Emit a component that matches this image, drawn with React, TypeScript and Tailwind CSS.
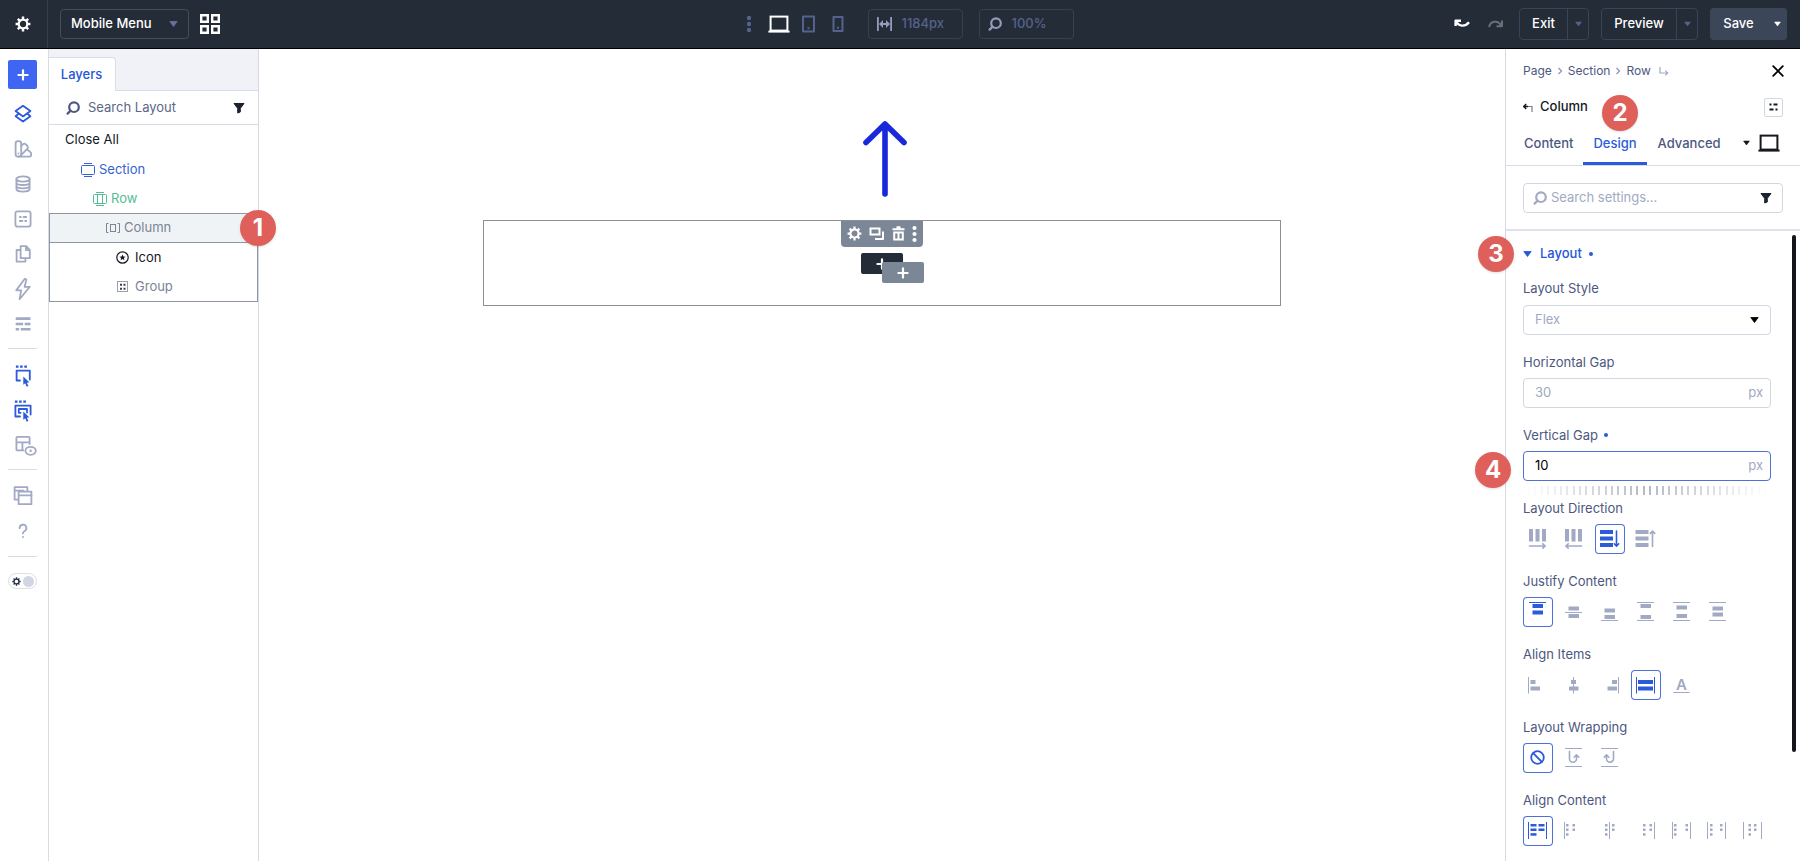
import React from 'react';

type IconProps = { children: React.ReactNode; size?: number; className?: string };

const Icon: React.FC<IconProps> = ({ children, size = 20, className = '' }) => (
  <svg
    width={size}
    height={size}
    viewBox={`0 0 ${size} ${size}`}
    fill="none"
    stroke="currentColor"
    strokeWidth="1.8"
    strokeLinejoin="round"
    strokeLinecap="round"
    className={`shrink-0 ${className}`}
    aria-hidden="true"
  >
    {children}
  </svg>
);

const Caret: React.FC<{ className?: string }> = ({ className = '' }) => (
  <svg width="9" height="6" viewBox="0 0 9 6" className={`shrink-0 ${className}`} aria-hidden="true">
    <path d="M.8.5h7.4L4.5 5.5z" fill="currentColor" stroke="currentColor" strokeWidth=".8" strokeLinejoin="round" />
  </svg>
);

const SearchIcon: React.FC<{ className?: string }> = ({ className = '' }) => (
  <svg width="14" height="14" viewBox="0 0 14 14" fill="none" stroke="currentColor" strokeWidth="2.2" strokeLinecap="round" className={`shrink-0 ${className}`} aria-hidden="true">
    <circle cx="8" cy="6.2" r="4.8" />
    <path d="M4.6 9.6 1.6 12.6" />
  </svg>
);

const FilterIcon: React.FC = () => (
  <svg width="12" height="12" viewBox="0 0 12 12" className="shrink-0 text-[#1c2330]" aria-hidden="true">
    <path d="M1 1.5h10L7.3 6.4V10L4.7 11V6.4z" fill="currentColor" stroke="currentColor" strokeWidth="1" strokeLinejoin="round" />
  </svg>
);

const LaptopIcon: React.FC = () => (
  <svg width="22" height="18" viewBox="0 0 22 18" fill="none" stroke="currentColor" strokeWidth="2" aria-hidden="true">
    <rect x="2.6" y="1.6" width="16.8" height="14" />
    <path d="M.4 16.6h21.2" strokeWidth="2" />
  </svg>
);

const GearIcon: React.FC<{ size: number }> = ({ size }) => (
  <svg width={size} height={size} viewBox="0 0 16 16" fill="none" stroke="currentColor" aria-hidden="true">
    <circle cx="8" cy="8" r="4.3" strokeWidth="2.2" />
    <path
      d="M8 .6v3M8 12.4v3M.6 8h3M12.4 8h3M2.8 2.8l2.1 2.1M11.1 11.1l2.1 2.1M2.8 13.2l2.1-2.1M11.1 4.9l2.1-2.1"
      strokeWidth="2.4"
    />
  </svg>
);

const PlusIcon: React.FC = () => (
  <svg width="12" height="12" viewBox="0 0 12 12" stroke="currentColor" strokeWidth="2.2" strokeLinecap="round" aria-hidden="true">
    <path d="M6 1.4v9.2M1.4 6h9.2" />
  </svg>
);

const Badge: React.FC<{ n: number; className: string }> = ({ n, className }) => (
  <span
    className={`absolute z-20 flex size-9 items-center justify-center rounded-full bg-[#df605b] text-2xl font-bold text-white shadow-sm ${className}`}
  >
    {n}
  </span>
);

const cursor = <path d="M10.3 9.6v8.2l1.9-1.5 1.5 3.5 1.7-.8-1.5-3.3 2.4-.4z" fill="currentColor" stroke="none" />;

const railTop = [
  {
    label: 'Layers',
    active: true,
    icon: (
      <Icon>
        <path d="M10 1.8 17.4 7 10 12.4 2.6 7zM5.6 9.6 2.6 12.2 10 17.6l7.4-5.4-3-2.6" />
      </Icon>
    ),
  },
  {
    label: 'Styles',
    icon: (
      <Icon>
        <rect x="2.6" y="2.2" width="5.6" height="15.4" rx="2.4" />
        <path d="M8.2 7 10 5.2a2 2 0 0 1 2.6 0l1.8 1.8a2 2 0 0 1 0 2.6L7.4 16.8M13.2 10.8h1.4l3 2.6a1.6 1.6 0 0 1 .5 1.2V16a1.6 1.6 0 0 1-1.6 1.6H5.4M5.4 14.4v.2" />
      </Icon>
    ),
  },
  {
    label: 'Data',
    icon: (
      <Icon>
        <ellipse cx="10" cy="5" rx="6.6" ry="2.6" />
        <path d="M3.4 5v10c0 1.5 3 2.7 6.6 2.7s6.6-1.2 6.6-2.7V5M3.4 8.4c0 1.5 3 2.6 6.6 2.6s6.6-1.1 6.6-2.6M3.4 11.8c0 1.5 3 2.6 6.6 2.6s6.6-1.1 6.6-2.6" />
      </Icon>
    ),
  },
  {
    label: 'Presets',
    icon: (
      <Icon>
        <rect x="2.4" y="2.4" width="15.2" height="15.2" rx="2" />
        <path d="M6.8 8h1M10.6 8h2.6M6.8 12h2.6M12.2 12h1" />
      </Icon>
    ),
  },
  {
    label: 'Library',
    icon: (
      <Icon>
        <path d="M7.6 2.2h5.6l3.6 3.6v8.4H7.6zM13 2.4v3.8h3.6M7.4 6H3.6v11.6h8.8v-3.2" />
      </Icon>
    ),
  },
  {
    label: 'Actions',
    icon: (
      <svg width="20" height="24" viewBox="0 0 20 24" fill="none" stroke="currentColor" strokeWidth="1.8" strokeLinejoin="round" aria-hidden="true">
        <path d="M11.8 1.8 3.2 13.4h5l-1.6 8.8L16.8 9.8h-5.2l1.8-7.2z" />
      </svg>
    ),
  },
  {
    label: 'Wireframe',
    icon: (
      <Icon>
        <path d="M4 4.6h12.2M4 10h4.8M13 10h3.2M4 15.2h.8M9 15.2h7.2" strokeWidth="2.6" strokeLinecap="square" />
      </Icon>
    ),
  },
];

const Rail: React.FC = () => (
  <nav aria-label="Builder tools" className="flex w-[49px] shrink-0 flex-col items-center border-r border-[#d9dce3] pt-[11px] pr-[3px] text-[#a1a9c3]">
    <button aria-label="Add" className="flex size-[29px] items-center justify-center rounded-xs bg-[#3f66f2] text-white">
      <PlusIcon />
    </button>
    <div className="mt-[7px] flex flex-col">
      {railTop.map(item => (
        <button
          key={item.label}
          aria-label={item.label}
          className={`flex h-[35px] w-[29px] items-center justify-center ${item.active ? 'text-[#2b5adb]' : ''}`}
        >
          {item.icon}
        </button>
      ))}
    </div>
    <hr className="mt-[7px] w-[29px] border-[#d9dce3]" />
    <div className="mt-[9px] flex flex-col text-[#2b5adb]">
      <button aria-label="Click mode" className="flex h-[35px] w-[29px] items-center justify-center">
        <Icon size={22}>
          <path d="M5 1.6h.4M9.2 1.6h.4M13.4 1.6h.4" strokeWidth="2.2" strokeLinecap="square" />
          <path d="M8 15.5H4.6V5.6h13.2v9" strokeWidth="1.8" />
          <g transform="translate(1 2)">{cursor}</g>
        </Icon>
      </button>
      <button aria-label="Grid mode" className="flex h-[35px] w-[29px] items-center justify-center">
        <Icon size={22}>
          <path d="M4 1.6h.4M8.2 1.6h.4M12.4 1.6h.4" strokeWidth="2.2" strokeLinecap="square" />
          <path d="M8 16.5H3.4V5.6h15.2v9" strokeWidth="1.8" />
          <path d="M8.6 12.8H6.8V9h8.2v3.6" strokeWidth="1.8" />
          <g transform="translate(1 2)">{cursor}</g>
        </Icon>
      </button>
      <button aria-label="Hover mode" className="flex h-[35px] w-[29px] items-center justify-center text-[#a1a9c3]">
        <svg width="26" height="22" viewBox="0 0 26 22" fill="none" stroke="currentColor" strokeWidth="1.8" strokeLinejoin="round" className="ml-1 shrink-0" aria-hidden="true">
          <path d="M12 15.4H5.4a1 1 0 0 1-1-1V2.8a1 1 0 0 1 1-1h11.2a1 1 0 0 1 1 1v7M4.400 7.400h13.200M10.400 7.400v8" />
          <ellipse cx="18.6" cy="15.800" rx="5.200" ry="4" />
          <circle cx="18.600" cy="15.800" r="1.200" fill="currentColor" stroke="none" />
        </svg>
      </button>
    </div>
    <hr className="mt-[6px] w-[29px] border-[#d9dce3]" />
    <div className="mt-2 flex flex-col">
      <button aria-label="Windows" className="flex h-[35px] w-[29px] items-center justify-center">
        <Icon size={22}>
          <path d="M6 14.6H2.6V2.2h12.8v3.6M2.6 5.600h9" />
          <rect x="6.6" y="6.6" width="12.8" height="12.6" />
          <path d="M6.6 10.400h12.8" />
        </Icon>
      </button>
      <button aria-label="Help" className="flex h-[35px] w-[29px] items-center justify-center">
        <Icon>
          <path d="M6.600 7.200a3.400 3.400 0 1 1 4.800 3c-1 .5-1.400 1-1.400 2.200M10 15.800v.2" />
        </Icon>
      </button>
    </div>
    <hr className="mt-2 w-[29px] border-[#d9dce3]" />
    <button aria-label="Toggle theme" className="mt-4 flex h-4 w-[29px] items-center justify-between rounded-full border border-[#dcdfe8] pr-[2px] pl-[3px] text-[#1f2a44]">
      <GearIcon size={9} />
      <span className="size-[11px] rounded-full bg-[#d3d6e2]" />
    </button>
  </nav>
);

const TopBar: React.FC = () => (
  <header className="grid h-[49px] shrink-0 grid-cols-[1fr_auto_1fr] items-center border-b border-black bg-[#242c38] pr-[13px] text-[13px] font-medium text-white">
    <div className="flex h-full items-center">
      <button aria-label="Settings" className="flex h-full w-12 items-center justify-center border-r border-[#343d4c] pr-px">
        <GearIcon size={16} />
      </button>
      <div className="relative ml-3 flex items-center">
        <select aria-label="Template" className="h-[30px] w-[129px] appearance-none rounded-sm border border-[#434d60] bg-transparent pl-[10px]">
          <option>Mobile Menu</option>
        </select>
        <Caret className="pointer-events-none absolute right-[11px] text-[#65719c]" />
      </div>
      <button aria-label="Grid view" className="ml-[11px]">
        <Icon size={20}>
          <path d="M1.200 1.200h6.600v6.600H1.200zM12.200 1.200h6.600v6.600h-6.600zM1.200 12.200h6.600v6.600H1.200zM12.200 12.200h6.600v6.600h-6.600z" strokeWidth="2.400" strokeLinejoin="miter" />
        </Icon>
      </button>
    </div>

    <div className="flex items-center pl-8 text-[#55628c]">
      <button aria-label="More">
        <svg width="6" height="18" viewBox="0 0 6 18" fill="currentColor" aria-hidden="true">
          <circle cx="3" cy="3" r="2.2" />
          <circle cx="3" cy="9" r="2.2" />
          <circle cx="3" cy="15" r="2.2" />
        </svg>
      </button>
      <button aria-label="Desktop" className="ml-4 text-white">
        <LaptopIcon />
      </button>
      <button aria-label="Tablet" className="ml-3">
        <svg width="13" height="18" viewBox="0 0 13 18" fill="none" stroke="currentColor" strokeWidth="2" strokeLinejoin="round" aria-hidden="true">
          <rect x="1" y="1.5" width="11" height="15" />
          <path d="M5.5 13.2h2" />
        </svg>
      </button>
      <button aria-label="Phone" className="ml-[17px]">
        <svg width="12" height="18" viewBox="0 0 12 18" fill="none" stroke="currentColor" strokeWidth="2" strokeLinejoin="round" aria-hidden="true">
          <rect x="1.5" y="2" width="9" height="14" />
          <path d="M5 12.8h2" />
        </svg>
      </button>
      <label className="ml-6 flex h-[30px] w-[95px] items-center gap-[10px] rounded-sm border border-[#364051] pl-2">
        <svg width="15" height="14" viewBox="0 0 15 14" fill="none" stroke="#929cbc" strokeWidth="1.6" aria-hidden="true">
          <path d="M.8 0v14M14.2 0v14M3.5 7h8" strokeWidth="2" />
          <path d="M2 7l4-4v8zM13 7 9 3v8z" fill="#929cbc" stroke="none" />
        </svg>
        <input aria-label="Canvas width" defaultValue="1184px" className="w-12 bg-transparent outline-none" />
      </label>
      <label className="ml-4 flex h-[30px] w-[95px] items-center gap-[10px] rounded-sm border border-[#364051] pl-2">
        <SearchIcon className="text-[#929cbc]" />
        <input aria-label="Zoom" defaultValue="100%" className="w-12 bg-transparent outline-none" />
      </label>
    </div>

    <div className="flex items-center justify-end">
      <button aria-label="Undo">
        <svg width="16" height="10" viewBox="0 0 16 10" fill="none" stroke="currentColor" strokeWidth="2.4" aria-hidden="true">
          <path d="M1.6 1v6M1 1.8h6M2 2.2c3 5.6 9 5.8 13 1" />
        </svg>
      </button>
      <button aria-label="Redo" className="ml-[18px] text-[#68707e]">
        <svg width="16" height="10" viewBox="0 0 16 10" fill="none" stroke="currentColor" strokeWidth="2" aria-hidden="true">
          <path d="M1 8C2.6 1.8 9.5.6 13.5 6.6M14 1.5v6.3M8.5 7.3H14" />
        </svg>
      </button>
      <div className="ml-[15px] flex h-8 items-stretch rounded-sm border border-[#39435a]">
        <button className="w-12 border-r border-[#39435a]">Exit</button>
        <button aria-label="Exit options" className="flex w-5 items-center justify-center text-[#55628c]">
          <Caret className="w-[7px]" />
        </button>
      </div>
      <div className="ml-3 flex h-8 items-stretch rounded-sm border border-[#39435a]">
        <button className="w-[75px] border-r border-[#39435a]">Preview</button>
        <button aria-label="Preview options" className="flex w-5 items-center justify-center text-[#55628c]">
          <Caret className="w-[7px]" />
        </button>
      </div>
      <div className="ml-3 flex h-8 items-stretch rounded-sm bg-[#3b4659]">
        <button className="w-[57px]">Save</button>
        <button aria-label="Save options" className="flex w-5 items-center justify-center">
          <Caret className="w-[7px]" />
        </button>
      </div>
    </div>
  </header>
);

const LayersPanel: React.FC = () => (
  <aside className="flex w-[210px] shrink-0 flex-col border-r border-[#d5d9e0] text-[13px]">
    <div className="flex h-[42px] items-end border-b border-[#d9dce6] bg-[#f1f2f7]">
      <button className="-mb-px h-[34px] w-[67px] rounded-tr-sm border-t border-r border-[#d9dce6] bg-white pt-px pr-px font-medium text-[#2557d6]">
        Layers
      </button>
    </div>
    <div className="flex h-[34px] items-center border-b border-[#d9dce6] pr-[13px] pl-[17px] text-[#4c5880]">
      <SearchIcon />
      <input aria-label="Search Layout" placeholder="Search Layout" className="ml-2 min-w-0 flex-1 outline-none placeholder:text-[#5b6688]" />
      <button aria-label="Filter layers">
        <FilterIcon />
      </button>
    </div>
    <button className="flex h-[30px] items-center pl-4 text-[#14181f]">Close All</button>
    <button className="flex h-[29px] items-center gap-1 pl-8 text-[#3563d3]">
      <svg width="14" height="14" viewBox="0 0 14 14" fill="none" stroke="currentColor" aria-hidden="true">
        <rect x=".5" y="2.5" width="13" height="9" rx="1" />
        <path d="M3 .5h8M3 13.500h8" />
      </svg>
      Section
    </button>
    <button className="flex h-[29px] items-center gap-1 pl-11 text-[#55bd93]">
      <svg width="14" height="14" viewBox="0 0 14 14" fill="none" stroke="currentColor" aria-hidden="true">
        <rect x=".5" y="2.5" width="13" height="9" rx="1" />
        <path d="M3 .5h8M3 13.500h8M4.500 2.500v9M9.500 2.500v9" />
      </svg>
      Row
    </button>
    <div className="border border-[#8d97a4]">
      <div className="relative">
        <button className="flex h-[29px] w-full items-center gap-1 border-b border-[#8d97a4] bg-[#f0f3f5] pl-14 text-[#7a8494]">
          <svg width="14" height="12" viewBox="0 0 14 12" fill="none" stroke="currentColor" aria-hidden="true">
            <rect x="4.5" y="2.500" width="5" height="7" />
            <path d="M2.5 1.5h-2v9h2M11.5 1.5h2v9h-2" />
          </svg>
          Column
        </button>
        <Badge n={1} className="-top-1 -right-[19px]" />
      </div>
      <button className="flex h-[29px] w-full items-center gap-[6px] pl-[66px] text-[#14181f]">
        <svg width="13" height="13" viewBox="0 0 13 13" fill="none" stroke="currentColor" aria-hidden="true">
          <circle cx="6.5" cy="6.5" r="5.7" strokeWidth="1.2" />
          <path d="M6.5 3.5l.9 2 2.2.2-1.7 1.4.5 2.2-1.9-1.2-1.9 1.2.5-2.2L3.4 5.7l2.2-.2z" fill="currentColor" stroke="none" />
        </svg>
        Icon
      </button>
      <button className="flex h-[29px] w-full items-center gap-[6px] pl-[66px] text-[#7a8494]">
        <svg width="13" height="13" viewBox="0 0 13 13" fill="none" stroke="#39404c" aria-hidden="true">
          <rect x="1.500" y="1.500" width="10" height="10" strokeDasharray="1 1" />
          <path d="M4 4.800h2M7.500 4.800h2M4 8.800h2M7.500 8.800h2" strokeWidth="2" />
        </svg>
        Group
      </button>
    </div>
  </aside>
);

const Canvas: React.FC = () => (
  <main className="flex min-w-0 flex-1 flex-col items-center pt-[71px]">
    <svg width="46" height="78" viewBox="0 0 46 78" fill="none" stroke="#1a28dc" strokeWidth="5.6" strokeLinecap="round" strokeLinejoin="round" className="ml-[6px]" aria-hidden="true">
      <path d="M23 74V4M4 22.5 23 4l19 18.5" />
    </svg>
    <section className="mt-[22px] flex h-[86px] w-[64%] flex-col items-center border border-[#8b9096]">
      <div className="flex h-[26px] w-[82px] items-center justify-between rounded-b-sm bg-[#7b8797] px-[6px] pb-px text-white">
        <button aria-label="Column settings">
          <GearIcon size={15} />
        </button>
        <button aria-label="Duplicate">
          <svg width="16" height="14" viewBox="0 0 16 14" fill="none" stroke="currentColor" strokeWidth="2" aria-hidden="true">
            <rect x="1.5" y="1.5" width="9" height="6" />
            <path d="M14 4.5V12H6" strokeLinejoin="round" />
          </svg>
        </button>
        <button aria-label="Delete">
          <svg width="13" height="15" viewBox="0 0 13 15" fill="none" stroke="currentColor" strokeWidth="2" aria-hidden="true">
            <path d="M.5 3.200h12M4.500 1.200h4M2.200 6v7.500h8.600V6M1.200 6.500h10.600M6.500 6v7" />
          </svg>
        </button>
        <button aria-label="More options">
          <svg width="5" height="18" viewBox="0 0 5 18" fill="currentColor" aria-hidden="true">
            <circle cx="2.5" cy="3" r="2.1" />
            <circle cx="2.5" cy="9" r="2.1" />
            <circle cx="2.5" cy="15" r="2.1" />
          </svg>
        </button>
      </div>
      <div className="relative mt-[6px]">
        <button aria-label="Add module" className="flex h-[21px] w-[42px] items-center justify-center rounded-xs bg-[#242c38] text-white">
          <PlusIcon />
        </button>
        <button aria-label="Add element" className="absolute top-[9px] left-[21px] flex h-[21px] w-[42px] items-center justify-center rounded-xs bg-[#7b8797] text-white">
          <PlusIcon />
        </button>
      </div>
    </section>
  </main>
);

/* Option glyphs are drawn on the 30px grid of their button. */
const Bars: React.FC<{ r: number[][] }> = ({ r }) => (
  <>
    {r.map(([x, y, w, h], i) => (
      <rect key={i} x={x} y={y} width={w} height={h} fill="currentColor" stroke="none" />
    ))}
  </>
);

const Line: React.FC<{ d: string }> = ({ d }) => <path d={d} strokeWidth="1" strokeLinecap="butt" />;

const rows3 = [8, 12.5, 17.2];
const dots = (a: number, b: number, w = 2.5) => [
  ...rows3.map(y => [a, y, w, 2.5]),
  ...rows3.slice(0, 2).map(y => [b, y, w, 2.5]),
];

const optionGroups = [
  {
    label: 'Layout Direction',
    active: 2,
    options: [
      <>
        <Bars r={[[6, 5, 4, 12.5], [12.5, 5, 4, 12.5], [19, 5, 4, 12.5]]} />
        <path d="M6.5 22H22M19.8 19.8l2.4 2.2-2.4 2.2" strokeWidth="1.6" />
      </>,
      <>
        <Bars r={[[6, 5, 4, 12.5], [12.5, 5, 4, 12.5], [19, 5, 4, 12.5]]} />
        <path d="M22.5 22H7M9.2 19.8 6.8 22l2.4 2.2" strokeWidth="1.6" />
      </>,
      <>
        <Bars r={[[5, 6, 13, 4], [5, 12.5, 13, 4], [5, 19, 13, 4]]} />
        <path d="M21.5 7v15M19.3 19.8l2.2 2.4 2.2-2.4" strokeWidth="1.6" />
      </>,
      <>
        <Bars r={[[4.5, 6, 13, 4], [4.5, 12.5, 13, 4], [4.5, 19, 13, 4]]} />
        <path d="M21.5 22.5V7.2M19.3 9.4 21.5 7l2.2 2.4" strokeWidth="1.6" />
      </>,
    ],
  },
  {
    label: 'Justify Content',
    active: 0,
    options: [
      <><Line d="M6 5.5h17" /><Bars r={[[9.5, 7, 10.5, 4], [9.5, 13.5, 10.5, 4]]} /></>,
      <><Line d="M6 15.5h17" /><Bars r={[[9.5, 9.5, 10.5, 4], [9.5, 17, 10.5, 4]]} /></>,
      <><Line d="M6 23.5h17" /><Bars r={[[9.5, 11.5, 10.5, 4], [9.5, 18, 10.5, 4]]} /></>,
      <><Line d="M6 5.5h17M6 23.5h17" /><Bars r={[[9.5, 7, 10.5, 4], [9.5, 18, 10.5, 4]]} /></>,
      <><Line d="M6 5.5h17M6 23.5h17" /><Bars r={[[9.5, 8.5, 10.5, 4], [9.5, 17, 10.5, 4]]} /></>,
      <><Line d="M6 5.5h17M6 23.5h17" /><Bars r={[[9.5, 9.5, 10.5, 4], [9.5, 15.5, 10.5, 4]]} /></>,
    ],
  },
  {
    label: 'Align Items',
    active: 3,
    options: [
      <><Line d="M5.5 7v16.5" /><Bars r={[[7.5, 10, 5, 4], [7.5, 16.5, 9.5, 4]]} /></>,
      <><Line d="M14.5 7v16.5" /><Bars r={[[12, 10, 5, 4], [10, 16.5, 9.5, 4]]} /></>,
      <><Line d="M23.5 7v16.5" /><Bars r={[[17, 10, 5, 4], [12.5, 16.5, 9.5, 4]]} /></>,
      <><Line d="M5.5 7v16.5M23.5 7v16.5" /><Bars r={[[7, 10, 15, 4], [7, 16.5, 15, 4]]} /></>,
      <>
        <text x="14.5" y="20" textAnchor="middle" fontSize="15" fontWeight="600" fill="currentColor" stroke="none">A</text>
        <Line d="M6.5 22.5h16" />
      </>,
    ],
  },
  {
    label: 'Layout Wrapping',
    active: 0,
    options: [
      <><circle cx="14.5" cy="14.5" r="6.3" /><path d="m10.2 10.2 8.6 8.6" /></>,
      <>
        <Line d="M6 5.5h17M6 23.5h17" />
        <path d="M10.5 8.5v7.2a3.5 3.5 0 0 0 7 0v-3.5M15.2 14.2l2.3-2.4 2.3 2.4" strokeWidth="1.6" />
      </>,
      <>
        <Line d="M6 5.5h17M6 23.5h17" />
        <path d="M18.5 8.5v7.2a3.5 3.5 0 0 1-7 0v-3.5M13.8 14.2l-2.3-2.4-2.3 2.4" strokeWidth="1.6" />
      </>,
    ],
  },
  {
    label: 'Align Content',
    active: 0,
    options: [
      <><Line d="M5.5 6v17M23.5 6v17" /><Bars r={dots(7.5, 15.5, 6)} /></>,
      <><Line d="M5.5 6v17" /><Bars r={dots(7, 13.5)} /></>,
      <><Line d="M14.5 6v17" /><Bars r={dots(10, 17)} /></>,
      <><Line d="M23.5 6v17" /><Bars r={dots(12, 18.5)} /></>,
      <><Line d="M5.5 6v17M23.5 6v17" /><Bars r={dots(7, 18.5)} /></>,
      <><Line d="M4.5 6v17M22.5 6v17" /><Bars r={dots(7, 17)} /></>,
      <><Line d="M4.5 6v17M22.5 6v17" /><Bars r={dots(9.5, 15)} /></>,
    ],
  },
];

const OptionGroup: React.FC<(typeof optionGroups)[number]> = ({ label, active, options }) => (
  <div role="group" aria-label={label} className="mb-[18px] shrink-0">
    <div className="h-[18px] leading-[18px]">{label}</div>
    <div className="mt-[7px] flex gap-[6px]">
      {options.map((glyph, i) => (
        <button
          key={i}
          type="button"
          aria-label={`${label} ${i + 1}`}
          aria-pressed={i === active}
          className={`size-[30px] rounded-sm ${i === active ? 'text-[#2b5adb] ring-1 ring-[#4d71d8] ring-inset' : 'text-[#a1a9c3]'}`}
        >
          <Icon size={30}>{glyph}</Icon>
        </button>
      ))}
    </div>
  </div>
);

const CrumbArrow: React.FC = () => (
  <svg width="16" height="8" viewBox="0 0 16 8" fill="none" stroke="#8f98b3" strokeWidth="1.3" aria-hidden="true">
    <path d="m6.5 1 3 3-3 3" />
  </svg>
);

const TICKS = 38;

const SettingsPanel: React.FC = () => (
  <aside className="flex w-[295px] shrink-0 flex-col border-l border-[#d5d9e0] text-[13px] text-[#4c5880]">
    <div className="flex h-11 items-center pr-4 pl-[17px] text-xs">
      <a href="#page">Page</a>
      <CrumbArrow />
      <a href="#section">Section</a>
      <CrumbArrow />
      <a href="#row">Row</a>
      <svg width="10" height="9" viewBox="0 0 10 9" fill="none" stroke="#a1a9c3" strokeWidth="1.2" className="ml-2" aria-hidden="true">
        <path d="M1 0v6h7.5M6.3 3.6 8.7 6 6.3 8.4" />
      </svg>
      <button aria-label="Close" className="ml-auto text-black">
        <svg width="12" height="12" viewBox="0 0 12 12" stroke="currentColor" strokeWidth="1.8" strokeLinecap="round" aria-hidden="true">
          <path d="m1.2 1.2 9.6 9.6M10.8 1.2l-9.6 9.6" />
        </svg>
      </button>
    </div>
    <div className="relative flex h-7 items-center pr-[17px] pl-[17px] font-medium text-[#14181f]">
      <svg width="10" height="9" viewBox="0 0 10 9" fill="none" stroke="currentColor" strokeWidth="1.2" aria-hidden="true">
        <path d="M1.5 3.5H9V9" stroke="#777f8c" />
        <path d="M3.2 1 .8 3.5 3.2 6M1 3.5h4" strokeWidth="1.4" />
      </svg>
      <span className="ml-[7px]">Column</span>
      <Badge n={2} className="top-[2px] left-24" />
      <button aria-label="Presets" className="ml-auto flex size-[19px] items-center justify-center rounded-xs border border-[#d3d7e2]">
        <svg width="9" height="8" viewBox="0 0 9 8" stroke="currentColor" strokeWidth="1.8" aria-hidden="true">
          <path d="M.5 1.500h2M4.500 1.500H8.500M.5 6.500h4M6.500 6.500h2" />
        </svg>
      </button>
    </div>
    <div className="flex h-[45px] items-stretch border-b border-[#d9dce6] pr-5 pl-2 font-medium">
      <button className="px-[10px] pt-[2px]">Content</button>
      <button className="border-b-3 border-[#2b5adb] px-[10px] pt-[5px] text-[#2b5adb]">Design</button>
      <button className="px-[11px] pt-[2px]">Advanced</button>
      <div className="ml-auto flex items-center gap-2 text-[#14181f]">
        <Caret className="w-[7px]" />
        <button aria-label="Desktop view"><LaptopIcon /></button>
      </div>
    </div>
    <div className="border-b-2 border-[#dfe2ea] pt-[17px] pr-[17px] pb-4 pl-[17px]">
      <div className="flex h-[30px] items-center rounded-sm border border-[#d3d7e2] pr-[10px] pl-[9px] text-[#a1a9c3]">
        <SearchIcon />
        <input aria-label="Search settings" placeholder="Search settings..." className="ml-1 min-w-0 flex-1 outline-none placeholder:text-[#a1a9c3]" />
        <button aria-label="Filter settings">
          <FilterIcon />
        </button>
      </div>
    </div>

    <div className="flex min-h-0 flex-1 justify-between pr-1 pl-[17px]">
      <form className="flex w-[248px] flex-col" onSubmit={e => e.preventDefault()}>
        <div className="relative flex h-12 shrink-0 items-center pb-[2px] text-[#2557d6]">
          <Badge n={3} className="top-[5px] -left-[45px]" />
          <button type="button" className="flex items-center font-medium">
            <Caret className="mr-2" />
            Layout
          </button>
          <span className="ml-[7px] size-1 rounded-full bg-[#2b5adb]" />
        </div>

        <div className="mb-[18px] shrink-0">
          <label htmlFor="layout-style" className="block h-[18px] leading-[18px]">Layout Style</label>
          <div className="relative mt-2 flex items-center">
            <select id="layout-style" className="h-[30px] w-full appearance-none rounded-sm border border-[#d3d7e2] pl-[11px] text-[#a1a9c3]">
              <option>Flex</option>
            </select>
            <Caret className="pointer-events-none absolute right-3 text-black" />
          </div>
        </div>

        <div className="mb-[18px] shrink-0">
          <label htmlFor="horizontal-gap" className="block h-[18px] leading-[18px]">Horizontal Gap</label>
          <div className="mt-[7px] flex h-[30px] items-center rounded-sm border border-[#d3d7e2] pr-[7px] pl-[11px] text-[#a1a9c3]">
            <input id="horizontal-gap" placeholder="30" className="min-w-0 flex-1 outline-none placeholder:text-[#a1a9c3]" />
            <span>px</span>
          </div>
        </div>

        <div className="mb-[18px] shrink-0">
          <label htmlFor="vertical-gap" className="flex h-[18px] items-center leading-[18px]">
            Vertical Gap
            <span className="ml-[6px] size-1 rounded-full bg-[#2b5adb]" />
          </label>
          <div className="relative mt-[7px] flex h-[30px] items-center rounded-sm border border-[#4d71d8] pr-[7px] pl-[11px] text-[#a1a9c3]">
            <input id="vertical-gap" defaultValue="10" className="min-w-0 flex-1 text-black outline-none" />
            <span>px</span>
            <div className="absolute inset-x-1 top-[34px] flex h-[9px] justify-between">
              {Array.from({ length: TICKS }).map((_, i) => (
                <span
                  key={i}
                  className="w-[2px] bg-[#b4b9c4]"
                  style={{ opacity: 1 - Math.abs(i - (TICKS - 1) / 2) / (TICKS / 2) }}
                />
              ))}
            </div>
            <Badge n={4} className="top-0 -left-[49px]" />
          </div>
        </div>

        {optionGroups.map(group => (
          <OptionGroup key={group.label} {...group} />
        ))}
      </form>
      <div className="mt-1 h-[82%] w-1 rounded-full bg-[#14161a]" />
    </div>
  </aside>
);

const App: React.FC = () => {
  return (
    <div className="flex h-screen flex-col overflow-hidden bg-white font-['Inter',sans-serif]">
      <TopBar />
      <div className="flex min-h-0 flex-1">
        <Rail />
        <LayersPanel />
        <Canvas />
        <SettingsPanel />
      </div>
    </div>
  );
};

export default App;
